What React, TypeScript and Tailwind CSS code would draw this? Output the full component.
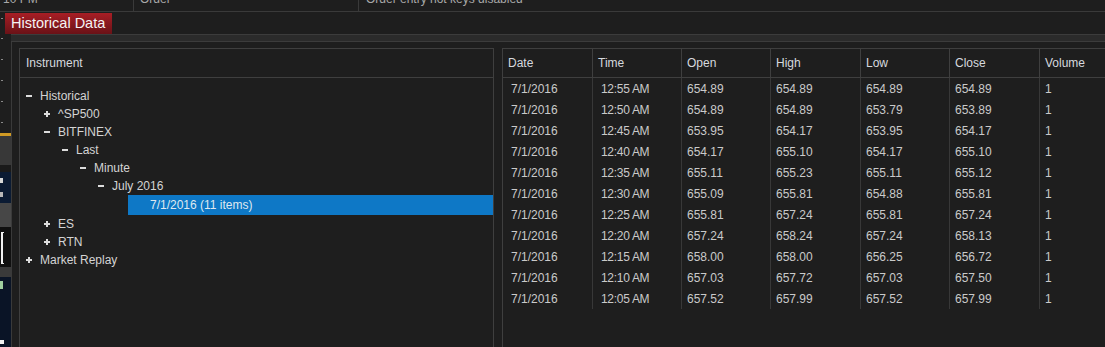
import React from "react";

const rows: string[][] = [
  ["12:55 AM", "654.89", "654.89", "654.89", "654.89"],
  ["12:50 AM", "654.89", "654.89", "653.79", "653.89"],
  ["12:45 AM", "653.95", "654.17", "653.95", "654.17"],
  ["12:40 AM", "654.17", "655.10", "654.17", "655.10"],
  ["12:35 AM", "655.11", "655.23", "655.11", "655.12"],
  ["12:30 AM", "655.09", "655.81", "654.88", "655.81"],
  ["12:25 AM", "655.81", "657.24", "655.81", "657.24"],
  ["12:20 AM", "657.24", "658.24", "657.24", "658.13"],
  ["12:15 AM", "658.00", "658.00", "656.25", "656.72"],
  ["12:10 AM", "657.03", "657.72", "657.03", "657.50"],
  ["12:05 AM", "657.52", "657.99", "657.52", "657.99"],
];

const cols = "grid grid-cols-[90px_89px_89px_90px_89px_90px_1fr]";

function Minus() {
  return <div className="w-[6px] h-[2px] bg-[#dcdcdc]" />;
}

function Plus() {
  return (
    <svg width="6" height="6" viewBox="0 0 6 6" className="block">
      <rect x="0" y="2" width="6" height="2" fill="#dcdcdc" />
      <rect x="2" y="0" width="2" height="6" fill="#dcdcdc" />
    </svg>
  );
}

function TreeRow({ level, open, label }: { level: number; open: boolean; label: string }) {
  const pad = ["pl-[6px]", "pl-[24px]", "pl-[42px]", "pl-[60px]", "pl-[78px]", "pl-[96px]"][level];
  return (
    <div className={`h-[18px] flex items-center ${pad}`}>
      <div className="w-[14px] flex items-center">{open ? <Minus /> : <Plus />}</div>
      <span>{label}</span>
    </div>
  );
}

export default function App() {
  return (
    <div className="w-[1105px] h-[347px] overflow-hidden bg-[#1e1e1e] flex flex-col text-[12px] font-['Liberation_Sans','Arial',sans-serif]">
      {/* background window row (clipped) */}
      <div className="h-[12px] shrink-0 flex border-b border-[#3a3a3a] overflow-hidden text-[#a8a8a8]">
        <div className="w-[134px] border-r border-[#3a3a3a] pl-[3px]">
          <div className="-mt-[8px] leading-[14px]">10 PM</div>
        </div>
        <div className="w-[225px] border-r border-[#3a3a3a] pl-[6px]">
          <div className="-mt-[8px] leading-[14px]">Order</div>
        </div>
        <div className="flex-1 pl-[7px]">
          <div className="-mt-[8px] leading-[14px]">Order entry hot keys disabled</div>
        </div>
      </div>

      {/* tab row */}
      <div className="h-[22px] shrink-0 flex">
        <div className="w-[5px] shrink-0 pt-[6px]">
          <div className="w-[2px] h-px bg-[#8a8a8a] ml-[1px]" />
        </div>
        <div className="mt-[1px] w-[107px] h-[21px] bg-gradient-to-b from-[#a81e25] to-[#6a1217] flex items-center pl-[6px] text-[14.5px] text-[#f4f4f4]">
          Historical Data
        </div>
        <div className="flex-1" />
      </div>

      {/* window row */}
      <div className="flex-1 flex min-h-0">
        {/* background strip on the left */}
        <div className="w-[11px] shrink-0 flex flex-col">
          <div className="h-[99px] flex flex-col pt-[4px] gap-[20px]">
            <div className="w-[2px] h-px bg-[#8a8a8a] ml-[1px]" />
            <div className="w-[2px] h-px bg-[#8a8a8a] ml-[1px]" />
            <div className="w-[2px] h-px bg-[#8a8a8a] ml-[1px]" />
            <div className="w-[2px] h-px bg-[#8a8a8a] ml-[1px]" />
            <div className="w-[2px] h-px bg-[#8a8a8a] ml-[1px]" />
          </div>
          <div className="h-[3px] bg-[#d09a24]" />
          <div className="h-[29px] bg-[#383838]" />
          <div className="h-[7px] bg-[#1a1a1a]" />
          <div className="h-[31px] bg-[#0b1b33] flex flex-col pt-[6px] gap-[9px]">
            <div className="w-[3px] h-[5px] bg-[#d8d8d8]" />
            <div className="w-[3px] h-[5px] bg-[#b8b8b8]" />
          </div>
          <div className="h-[24px] bg-[#474747]" />
          <div className="h-[40px] bg-[#101010] pt-[5px] pl-[1px]">
            <div className="w-[3px] h-[32px] border-l-2 border-y border-[#f0f0f0]" />
          </div>
          <div className="h-[10px] bg-[#3a3a3a]" />
          <div className="h-[58px] bg-[#0a1426] pt-[4px]">
            <div className="w-[3px] h-[8px] bg-[#9fcf9f]" />
          </div>
          <div className="flex-1 bg-[#0a1426] pt-[5px]">
            <div className="w-[4px] h-[4px] bg-[#f0f0f0]" />
          </div>
        </div>

        {/* window body */}
        <div className="flex-1 flex flex-col min-w-0">
          <div className="h-[8px] shrink-0 border-y border-[#3c3c3c] bg-[#2b2b2b]" />
          <div className="flex-1 flex border-l border-[#3a3a3a] pl-[7px] pt-[6px] gap-[8px] min-h-0">
            {/* Instrument panel */}
            <div className="w-[475px] shrink-0 border-l border-t border-r border-[#3f3f3f] flex flex-col text-[#d4d4d4]">
              <div className="h-[29px] shrink-0 border-b border-[#3f3f3f] flex items-center pl-[6px] text-[#d6d9de]">
                Instrument
              </div>
              <div className="pt-[9px] flex flex-col">
                <TreeRow level={0} open label="Historical" />
                <TreeRow level={1} open={false} label="^SP500" />
                <TreeRow level={1} open label="BITFINEX" />
                <TreeRow level={2} open label="Last" />
                <TreeRow level={3} open label="Minute" />
                <TreeRow level={4} open label="July 2016" />
                <div className="h-[20px] ml-[108px] bg-[#0e78c6] flex items-center pl-[22px] text-[#dfe8f0]">
                  7/1/2016 (11 items)
                </div>
                <TreeRow level={1} open={false} label="ES" />
                <TreeRow level={1} open={false} label="RTN" />
                <TreeRow level={0} open={false} label="Market Replay" />
              </div>
            </div>

            {/* Data grid */}
            <div className="flex-1 min-w-0 border-l border-t border-[#3f3f3f] flex flex-col">
              <div className={`${cols} h-[29px] shrink-0 border-b border-[#3f3f3f] text-[#d6d9de]`}>
                {["Date", "Time", "Open", "High", "Low", "Close", "Volume"].map((h, i) => (
                  <div
                    key={h}
                    className={`flex items-center pl-[5px] ${i < 6 ? "border-r border-[#3f3f3f]" : ""}`}
                  >
                    {h}
                  </div>
                ))}
              </div>
              <div className="flex flex-col text-[#cacaca]">
                {rows.map((r, ri) => (
                  <div key={ri} className={`${cols} h-[21px]`}>
                    <div className="flex items-center pl-[8px] border-r border-[#383838]">7/1/2016</div>
                    <div className="flex items-center pl-[8px] border-r border-[#383838] tracking-[-0.3px]">{r[0]}</div>
                    <div className="flex items-center pl-[5px] border-r border-[#383838]">{r[1]}</div>
                    <div className="flex items-center pl-[5px] border-r border-[#383838]">{r[2]}</div>
                    <div className="flex items-center pl-[5px] border-r border-[#383838]">{r[3]}</div>
                    <div className="flex items-center pl-[5px] border-r border-[#383838]">{r[4]}</div>
                    <div className="flex items-center pl-[5px]">1</div>
                  </div>
                ))}
              </div>
            </div>
          </div>
        </div>
      </div>
    </div>
  );
}
